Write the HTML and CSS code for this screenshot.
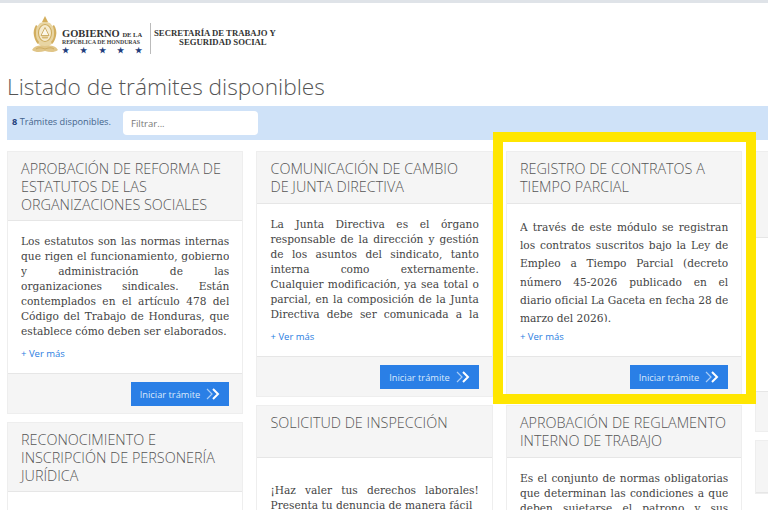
FILE: index.html
```html
<!DOCTYPE html>
<html lang="es">
<head>
  <meta charset="UTF-8">
  <meta name="viewport" content="width=device-width, initial-scale=1.0">
  <title>Listado de trámites disponibles</title>
  <link rel="stylesheet" href="styles.css">
</head>
<body>
  <header class="cabecera">
    <svg class="escudo" viewBox="0 0 28 38" width="28" height="38">
      <path d="M14 0l1.500 3 1.500 3-3 1.500-3-1.500 1.500-3z" fill="#d4ae5c"/>
      <path d="M9 7c2-1.500 8-1.500 10 0l4 5 1 8-2 7-4 3h-8l-4-3-2-7 1-8z" fill="#e8d5a3"/>
      <path d="M5 9c-2 3-3 7-2 11s2 6 4 8l1-2c-2-2-3-5-3-8s0-6 1.500-8zM23 9c2 3 3 7 2 11s-2 6-4 8l-1-2c2-2 3-5 3-8s0-6-1.500-8z" fill="#d2ae5f"/>
      <ellipse cx="14" cy="17" rx="6.500" ry="8.500" fill="#f5ebd0" stroke="#cdaa5c" stroke-width="1.100"/>
      <path d="M14 11.500l4 8h-8z" fill="#fbf7ea" stroke="#c4a050" stroke-width=".8"/>
      <path d="M10.500 20.500h7l-1 2h-5z" fill="#d8b972"/>
      <path d="M1 34c3-5 8-5 13-4 5-1 10-1 13 4-4 3-9 2-13 1-4 1-9 2-13-1z" fill="#e0c588"/>
      <path d="M5 33c3-2 6-1 9 0 3-1 6-2 9 0" fill="none" stroke="#c4a050" stroke-width=".7"/>
    </svg>
    <div class="gobierno">
      <div class="gobierno-nombre">GOBIERNO <small>DE LA</small></div>
      <div class="gobierno-pais">REPÚBLICA DE HONDURAS</div>
      <div class="gobierno-estrellas"><span>★</span><span>★</span><span>★</span><span>★</span><span>★</span></div>
    </div>
    <div class="secretaria">SECRETARÍA DE TRABAJO Y<br><span class="secretaria-linea">SEGURIDAD SOCIAL</span></div>
  </header>

  <h1 class="titulo">Listado de trámites disponibles</h1>

  <div class="filtro">
    <span class="filtro-total"><b>8</b> Trámites disponibles.</span>
    <input class="filtro-input" type="text" placeholder="Filtrar...">
  </div>

  <main class="listado">
    <div class="columna">
      <section class="tarjeta">
        <h2 class="tarjeta-titulo alto-3">APROBACIÓN DE REFORMA DE ESTATUTOS DE LAS ORGANIZACIONES SOCIALES</h2>
        <div class="tarjeta-cuerpo">
          <p class="descripcion">Los estatutos son las normas internas que rigen el funcionamiento, gobierno y administración de las organizaciones sindicales. Están contemplados en el artículo 478 del Código del Trabajo de Honduras, que establece cómo deben ser elaborados.</p>
          <a class="ver-mas" href="#">+ Ver más</a>
        </div>
        <div class="tarjeta-pie">
          <a class="boton" href="#">Iniciar trámite
            <svg class="boton-icono" viewBox="0 0 14 12" width="14" height="12"><path d="M1 1l5 5-5 5" fill="none" stroke="#a9cdf6" stroke-width="1.200"/><path d="M7 1l5 5-5 5" fill="none" stroke="#fff" stroke-width="2"/></svg>
          </a>
        </div>
      </section>
      <section class="tarjeta">
        <h2 class="tarjeta-titulo alto-3">RECONOCIMIENTO E INSCRIPCIÓN DE PERSONERÍA JURÍDICA</h2>
        <div class="tarjeta-cuerpo"></div>
      </section>
    </div>

    <div class="columna">
      <section class="tarjeta">
        <h2 class="tarjeta-titulo">COMUNICACIÓN DE CAMBIO DE JUNTA DIRECTIVA</h2>
        <div class="tarjeta-cuerpo">
          <p class="descripcion">La Junta Directiva es el órgano responsable de la dirección y gestión de los asuntos del sindicato, tanto interna como externamente. Cualquier modificación, ya sea total o parcial, en la composición de la Junta Directiva debe ser comunicada a la Secretaría de Trabajo.</p>
          <a class="ver-mas" href="#">+ Ver más</a>
        </div>
        <div class="tarjeta-pie">
          <a class="boton" href="#">Iniciar trámite
            <svg class="boton-icono" viewBox="0 0 14 12" width="14" height="12"><path d="M1 1l5 5-5 5" fill="none" stroke="#a9cdf6" stroke-width="1.200"/><path d="M7 1l5 5-5 5" fill="none" stroke="#fff" stroke-width="2"/></svg>
          </a>
        </div>
      </section>
      <section class="tarjeta">
        <h2 class="tarjeta-titulo">SOLICITUD DE INSPECCIÓN</h2>
        <div class="tarjeta-cuerpo">
          <p class="descripcion con-espacio">¡Haz valer tus derechos laborales! Presenta tu denuncia de manera fácil</p>
        </div>
      </section>
    </div>

    <div class="columna">
      <section class="tarjeta">
        <h2 class="tarjeta-titulo">REGISTRO DE CONTRATOS A TIEMPO PARCIAL</h2>
        <div class="tarjeta-cuerpo">
          <p class="descripcion holgada">A través de este módulo se registran los contratos suscritos bajo la Ley de Empleo a Tiempo Parcial (decreto número 45-2026 publicado en el diario oficial La Gaceta en fecha 28 de marzo del 2026).</p>
          <a class="ver-mas" href="#">+ Ver más</a>
        </div>
        <div class="tarjeta-pie">
          <a class="boton" href="#">Iniciar trámite
            <svg class="boton-icono" viewBox="0 0 14 12" width="14" height="12"><path d="M1 1l5 5-5 5" fill="none" stroke="#a9cdf6" stroke-width="1.200"/><path d="M7 1l5 5-5 5" fill="none" stroke="#fff" stroke-width="2"/></svg>
          </a>
        </div>
      </section>
      <section class="tarjeta">
        <h2 class="tarjeta-titulo">APROBACIÓN DE REGLAMENTO INTERNO DE TRABAJO</h2>
        <div class="tarjeta-cuerpo">
          <p class="descripcion">Es el conjunto de normas obligatorias que determinan las condiciones a que deben sujetarse el patrono y sus trabajadores en la ejecución del trabajo.</p>
        </div>
      </section>
    </div>

    <div class="columna">
      <section class="tarjeta">
        <div class="tarjeta-titulo alto-4"></div>
        <div class="tarjeta-cuerpo alto-cuerpo"></div>
        <div class="tarjeta-pie"></div>
      </section>
      <section class="tarjeta">
        <div class="tarjeta-titulo"></div>
      </section>
    </div>

    <div class="resaltado"></div>
  </main>
</body>
</html>
```

FILE: styles.css
```css
html, body {
  height: 100%;
}

body {
  margin: 0;
  overflow: hidden;
  background-color: white;
  border-top: 3px solid #dfe3e8;
  box-sizing: border-box;
  font-family: "Open Sans", sans-serif;
  color: #555;
}

.cabecera {
  display: flex;
  align-items: center;
  height: 67px;
  padding-left: 31px;
  box-sizing: border-box;
  padding-bottom: 3px;
  font-family: "Liberation Serif", serif;
  font-weight: bold;
  color: #333;
}

.escudo {
  margin-right: 3px;
}

.gobierno {
  width: 88px;
  height: 31px;
  margin-top: 6px;
  border-right: 1px solid #bbb;
}

.gobierno-nombre {
  padding-top: 7px;
  font-size: 10.500px;
  line-height: 8px;
}

.gobierno-nombre small {
  font-size: 6.500px;
}

.gobierno-pais {
  font-size: 5.800px;
  line-height: 7px;
  color: #444;
}

.gobierno-estrellas {
  display: flex;
  justify-content: space-between;
  width: 80px;
  font-size: 8px;
  line-height: 9px;
  color: #1f3f7d;
}

.secretaria {
  margin-left: 3px;
  margin-top: 6px;
  font-size: 8.700px;
  line-height: 9.500px;
  text-align: center;
}

.secretaria-linea {
  padding-left: 16px;
}

.titulo {
  margin: 0;
  height: 36px;
  padding-left: 7px;
  font-size: 22.700px;
  font-weight: 300;
  line-height: 34px;
  color: #555;
}

.filtro {
  display: flex;
  align-items: center;
  height: 34px;
  margin-left: 7px;
  padding-left: 5px;
  background-color: #cfe2f8;
}

.filtro-total {
  width: 111px;
  margin-top: -3px;
  font-size: 9.200px;
  color: #44648c;
}

.filtro-total b {
  color: #1f3f7d;
}

.filtro-input {
  width: 135px;
  height: 24px;
  padding: 0 8px;
  box-sizing: border-box;
  border: none;
  border-radius: 4px;
  font-family: "Open Sans", sans-serif;
  font-size: 9.500px;
}

.filtro-input::placeholder {
  color: #777;
}

.listado {
  position: relative;
  display: flex;
  gap: 13.200px;
  margin-top: 11px;
  padding-left: 7px;
}

.columna {
  flex: none;
  width: 236.300px;
  display: flex;
  flex-direction: column;
  gap: 8px;
}

.tarjeta {
  border: 1px solid #eee;
  box-sizing: border-box;
}

.tarjeta-titulo {
  margin: 0;
  height: 52px;
  padding: 8px 13px 0;
  box-sizing: border-box;
  background-color: #f5f5f5;
  border-bottom: 1px solid #e6e6e6;
  font-size: 14.400px;
  font-weight: 300;
  line-height: 18px;
  color: #555;
}

.alto-3 {
  height: 69px;
}

.alto-4 {
  height: 86px;
}

.tarjeta-cuerpo {
  padding: 13px 13px 11px;
}

.alto-cuerpo {
  height: 153px;
  box-sizing: border-box;
}

.descripcion {
  max-height: 105px;
  margin: 0;
  overflow: hidden;
  font-family: "DejaVu Serif Condensed", "DejaVu Serif", serif;
  font-stretch: condensed;
  font-size: 11.800px;
  line-height: 15px;
  text-align: justify;
  color: #444;
}

.holgada {
  max-height: 104px;
  margin-top: 1px;
  line-height: 18.200px;
}

.con-espacio {
  margin-top: 12px;
}

.ver-mas {
  display: block;
  margin-top: 7px;
  font-size: 9.500px;
  line-height: 16px;
  color: #2a7de1;
  text-decoration: none;
}

.tarjeta-pie {
  display: flex;
  justify-content: flex-end;
  height: 40px;
  padding: 8px 13px 0;
  box-sizing: border-box;
  background-color: #f5f5f5;
  border-top: 1px solid #e6e6e6;
}

.boton {
  display: flex;
  align-items: center;
  gap: 6px;
  height: 24px;
  padding: 0 9px;
  background-color: #2a7fe6;
  font-size: 9.300px;
  color: #dbe9fb;
  text-decoration: none;
}

/* recuadro amarillo puesto encima de la captura */
.resaltado {
  position: absolute;
  left: 493px;
  top: -19px;
  width: 263px;
  height: 272px;
  box-sizing: border-box;
  border: 10px solid #ffe600;
  pointer-events: none;
}
```
